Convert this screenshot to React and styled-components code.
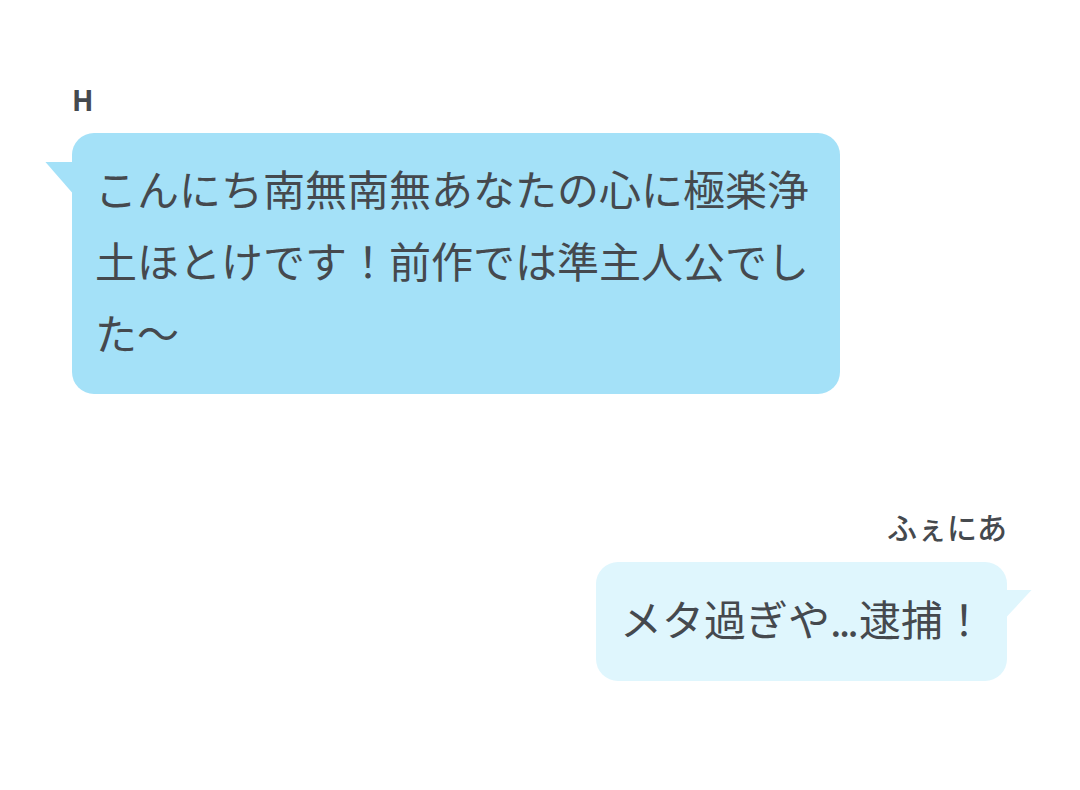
import React from "react";
import styled, { createGlobalStyle } from "styled-components";

const Global = createGlobalStyle`
  html, body { margin: 0; padding: 0; background: #ffffff; }
  body { font-family: "Noto Sans CJK JP", "Noto Sans", sans-serif; color: #45494e; }
`;

const Page = styled.div`
  width: 1080px;
  height: 790px;
  box-sizing: border-box;
  padding: 84px 73px 0 72px;
  display: flex;
  flex-direction: column;
  gap: 114px;
`;

const Group = styled.div`
  display: flex;
  flex-direction: column;
  align-items: ${(p) => (p.$side === "right" ? "flex-end" : "flex-start")};
`;

const Name = styled.div`
  font-family: ${(p) => (p.$latin ? '"Noto Sans", sans-serif' : '"Noto Sans CJK JP", sans-serif')};
  font-size: ${(p) => p.$size}px;
  font-weight: ${(p) => p.$weight};
  line-height: 1.2;
  color: #45494e;
  margin-bottom: ${(p) => p.$gap}px;
`;

const Bubble = styled.div`
  position: relative;
  box-sizing: border-box;
  width: ${(p) => (p.$width ? `${p.$width}px` : "fit-content")};
  padding: ${(p) => p.$pad};
  border-radius: 22px;
  background: ${(p) => p.$bg};
  font-size: 42px;
  line-height: 72px;
  color: #45494e;

  &::before {
    content: "";
    position: absolute;
    top: ${(p) => (p.$side === "right" ? 28 : 29)}px;
    width: 27px;
    height: 31px;
    background: ${(p) => p.$bg};
    ${(p) =>
      p.$side === "right"
        ? `right: -25px; width: 25px; height: 27px; clip-path: polygon(0 0, 100% 0, 0 100%);`
        : `left: -27px; clip-path: polygon(0 0, 100% 0, 100% 100%);`}
  }
`;

const Dots = styled.span`
  letter-spacing: -3px;
  margin-right: 3px;
`;

export default function App() {
  return (
    <>
      <Global />
      <Page>
        <Group $side="left">
          <Name $latin $size={28} $weight={700} $gap={15}>H</Name>
          <Bubble $side="left" $bg="#a4e1f8" $width={768} $pad="19px 26px 26px 23px">
            こんにち南無南無あなたの心に極楽浄土ほとけです！前作では準主人公でした〜
          </Bubble>
        </Group>
        <Group $side="right">
          <Name $size={30} $weight={500} $gap={18}>ふぇにあ</Name>
          <Bubble $side="right" $bg="#dff6fd" $pad="20px 22px 27px 24px">
            メタ過ぎや<Dots>...</Dots>逮捕！
          </Bubble>
        </Group>
      </Page>
    </>
  );
}
